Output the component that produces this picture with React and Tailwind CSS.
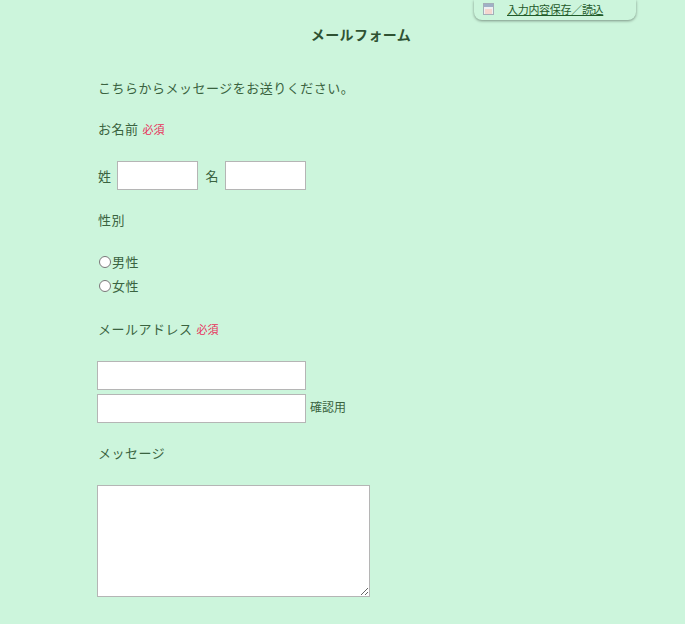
const fontStack = { fontFamily: '"Noto Sans CJK JP", "Liberation Sans", sans-serif' }

const Required = () => (
  <span className="ml-[4px] inline-block w-[22px] text-[11px] tracking-[-0.1px] text-[#e8305a]">必須</span>
)

const inputClass = "h-[29px] border border-[#b5b5b5] bg-white outline-none"

const App = () => {
  return (
    <div
      className="h-[624px] w-[685px] overflow-hidden bg-[#ccf5dc] text-[13px] leading-5 tracking-[0.5px] text-[#3a6340]"
      style={fontStack}
    >
      {/* Save / load tab */}
      <div className="flex justify-end pr-[49px]">
        <div className="flex h-[20px] w-[162px] items-center rounded-b-lg bg-[#ccf5dc] pl-[9px] shadow-[0_1px_3px_rgba(0,0,0,0.4)]">
          <svg width="11" height="12" viewBox="0 0 11 12" className="mb-[3px]">
            <rect x="0.5" y="0.5" width="10" height="11" fill="#eef0f2" stroke="#a4aeb8" />
            <rect x="1" y="1" width="9" height="3" fill="#9fb0c6" />
            <rect x="2" y="6" width="7" height="5" fill="#f5d6cf" />
          </svg>
          <a href="#" className="mb-[3px] ml-[13px] text-[11px] tracking-[-0.3px] text-[#1f5a2a] underline">
            入力内容保存／読込
          </a>
        </div>
      </div>

      <div className="ml-[97px] w-[528px]">
        <h1 className="mt-[4px] text-center text-[14px] font-bold tracking-[0.4px] text-[#2f5233]">メールフォーム</h1>

        <p className="mt-[34px] pl-[1px]">こちらからメッセージをお送りください。</p>

        <div className="mt-[21px] pl-[1px]">
          お名前<Required />
        </div>

        <div className="mt-[22px] flex items-center pl-[1px]">
          <span>姓</span>
          <input type="text" className={`${inputClass} ml-[5px] w-[81px]`} />
          <span className="ml-[8px]">名</span>
          <input type="text" className={`${inputClass} ml-[6px] w-[81px]`} />
        </div>

        <div className="mt-[20px] pl-[1px]">性別</div>

        <div className="mt-[22px] flex flex-col gap-[4px] pl-[2px]">
          <label className="flex items-center">
            <input type="radio" name="gender" className="m-0 h-[12px] w-[12px]" />
            <span className="ml-[1px]">男性</span>
          </label>
          <label className="flex items-center">
            <input type="radio" name="gender" className="m-0 h-[12px] w-[12px]" />
            <span className="ml-[1px]">女性</span>
          </label>
        </div>

        <div className="mt-[23px] pl-[1px]">
          メールアドレス<Required />
        </div>

        <div className="mt-[22px] flex flex-col gap-[4px]">
          <input type="text" className={`${inputClass} w-[209px]`} />
          <div className="flex items-center">
            <input type="text" className={`${inputClass} w-[209px]`} />
            <span className="mb-[3px] ml-[4px] text-[12px] tracking-normal">確認用</span>
          </div>
        </div>

        <div className="mt-[20px] pl-[1px]">メッセージ</div>

        <textarea className="mt-[22px] block h-[112px] w-[273px] border border-[#b5b5b5] bg-white outline-none" />
      </div>
    </div>
  )
}

export default App
